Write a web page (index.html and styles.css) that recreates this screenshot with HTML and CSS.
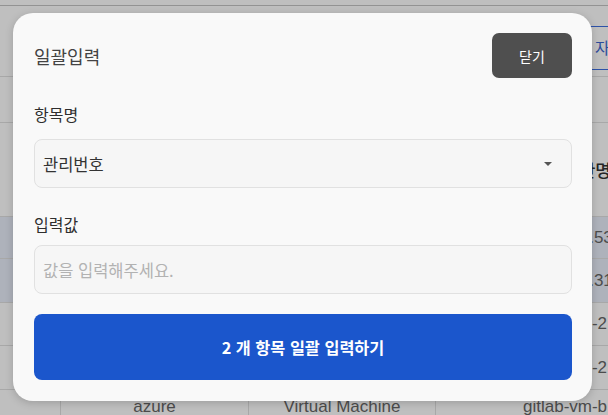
FILE: index.html
```html
<!DOCTYPE html>
<html lang="ko">
<head>
<meta charset="utf-8">
<title>일괄입력</title>
<link rel="stylesheet" href="styles.css">
</head>
<body>
<div class="page">
  <div class="topbar"></div>
  <div class="toolbar">
    <div class="tool-btn">자산 등록</div>
  </div>
  <div class="table">
    <div class="row row-filter"></div>
    <div class="row row-head">
      <div class="cell"></div>
      <div class="cell"></div>
      <div class="cell"></div>
      <div class="cell cell-head">자산명</div>
    </div>
    <div class="row row-sel r41">
      <div class="cell"></div>
      <div class="cell"></div>
      <div class="cell"></div>
      <div class="cell cell-name">10.100.1.53</div>
    </div>
    <div class="row row-sel r43">
      <div class="cell"></div>
      <div class="cell"></div>
      <div class="cell"></div>
      <div class="cell cell-name">10.100.2.31</div>
    </div>
    <div class="row r42">
      <div class="cell"></div>
      <div class="cell"></div>
      <div class="cell"></div>
      <div class="cell cell-name">gitlab-vm-2</div>
    </div>
    <div class="row r43">
      <div class="cell"></div>
      <div class="cell"></div>
      <div class="cell"></div>
      <div class="cell cell-name">gitlab-vm-2</div>
    </div>
    <div class="row row-last">
      <div class="cell"></div>
      <div class="cell cell-center">azure</div>
      <div class="cell cell-center">Virtual Machine</div>
      <div class="cell cell-name">gitlab-vm-b</div>
    </div>
  </div>
</div>
<div class="overlay"></div>
<div class="modal">
  <div class="modal-header">
    <div class="modal-title">일괄입력</div>
    <button class="btn-close" type="button">닫기</button>
  </div>
  <div class="field-label label-first">항목명</div>
  <div class="select">
    <span class="select-value">관리번호</span>
    <span class="select-arrow"></span>
  </div>
  <div class="field-label label-second">입력값</div>
  <div class="input">
    <span class="placeholder">값을 입력해주세요.</span>
  </div>
  <button class="btn-submit" type="button">2 개 항목 일괄 입력하기</button>
</div>
</body>
</html>
```
FILE: styles.css
```css
* { box-sizing: border-box; }
html, body {
  margin: 0;
  padding: 0;
  width: 608px;
  height: 415px;
  overflow: hidden;
  background: #fff;
}
body {
  font-family: "Noto Sans CJK KR", "Noto Sans", sans-serif;
  position: relative;
}
.page {
  width: 608px;
  height: 415px;
  overflow: hidden;
  font-family: "Liberation Sans", "Noto Sans CJK KR", sans-serif;
  color: #666;
}
.topbar {
  height: 6px;
  border-bottom: 1px solid #c4c4c4;
}
.toolbar {
  height: 71px;
  border-bottom: 1px solid #e0e0e0;
  padding-top: 20px;
  padding-left: 578px;
}
.tool-btn {
  width: 120px;
  height: 44px;
  border: 1.5px solid #3d6ee0;
  border-radius: 4px;
  color: #3a66d0;
  font-family: "Noto Sans CJK KR", sans-serif;
  font-size: 16px;
  line-height: 41px;
  padding-left: 16px;
  white-space: nowrap;
}
.row {
  display: grid;
  grid-template-columns: 60px 188px 187px 220px;
  border-bottom: 1px solid #e0e0e0;
  white-space: nowrap;
}
.row-filter { height: 46px; }
.row-head { height: 94px; }
.row-sel { background: #e9eefa; }
.r41 { height: 42px; }
.r42 { height: 43px; }
.r43 { height: 44px; }
.row-last { height: 40px; border-bottom: none; }
.cell {
  display: flex;
  align-items: center;
  font-size: 17px;
  line-height: 20px;
  color: #666;
  border-left: 1px solid #e0e0e0;
}
.cell:first-child { border-left: none; }
.cell-name { padding-left: 87px; }
.cell-head {
  padding-left: 128px;
  font-family: "Noto Sans CJK KR", sans-serif;
  font-weight: 500;
  color: #333;
}
.cell-center { justify-content: center; }
.row-last .cell {
  align-items: flex-start;
  padding-top: 7px;
}
.overlay {
  position: absolute;
  left: 0;
  top: 0;
  width: 608px;
  height: 415px;
  background: rgba(0, 0, 0, 0.25);
}
.modal {
  position: absolute;
  left: 13px;
  top: 13px;
  width: 579px;
  background: #f9f9f9;
  border-radius: 20px;
  padding: 20px 20px 21px 21px;
  box-shadow: 0 2px 8px rgba(0, 0, 0, 0.18);
  display: flex;
  flex-direction: column;
}
.modal-header {
  display: flex;
  justify-content: space-between;
  align-items: center;
  height: 45px;
}
.modal-title {
  font-size: 18px;
  color: #434343;
  line-height: 24px;
}
.btn-close {
  width: 80px;
  height: 45px;
  border: none;
  border-radius: 7px;
  background: #4f4f4f;
  color: #fff;
  font-family: "Noto Sans CJK KR", sans-serif;
  font-size: 14px;
  padding: 0;
}
.field-label {
  font-size: 16px;
  line-height: 22px;
  font-weight: 400;
  color: #2e2e2e;
}
.label-first { margin-top: 25px; }
.label-second { margin-top: 25px; }
.select, .input {
  height: 49px;
  border: 1px solid #e1e1e1;
  border-radius: 8px;
  background: #f6f6f6;
  display: flex;
  align-items: center;
  padding-left: 8px;
  font-size: 16.5px;
}
.select {
  margin-top: 14px;
  justify-content: space-between;
  padding-right: 19px;
}
.select-value { color: #333; }
.select-arrow {
  width: 0;
  height: 0;
  border-left: 4px solid transparent;
  border-right: 4px solid transparent;
  border-top: 4px solid #555;
  margin-top: 1px;
}
.input { margin-top: 10px; }
.placeholder { color: #b2b2b2; }
.btn-submit {
  margin-top: 20px;
  height: 66px;
  border: none;
  border-radius: 8px;
  background: #1b56cc;
  color: #fff;
  font-family: "Noto Sans CJK KR", sans-serif;
  font-size: 16.3px;
  font-weight: 700;
  padding: 0;
}
```
